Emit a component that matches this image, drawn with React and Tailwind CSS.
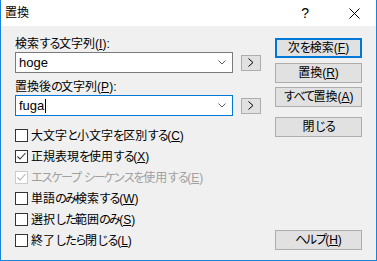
import React from 'react';

const font = { fontFamily: '"Liberation Sans", "Noto Sans CJK JP", sans-serif' };

// Meiryo UI 風に仮名だけ詰める
const Jp = ({ text }) =>
	Array.from(text).map((ch, i) =>
		/[\u3040-\u30ff]/.test(ch) ? (
			<span key={i} className="tracking-[-2px]">
				{ch}
			</span>
		) : (
			<span key={i}>{ch}</span>
		)
	);

const Key = ({ k }) => (
	<>
		(<span className="underline underline-offset-[1px]">{k}</span>)
	</>
);

const ComboBox = ({ value, focused, caret }) => (
	<div className="flex items-center">
		<div
			className={`w-[218px] h-[21px] bg-white flex items-center pl-[3px] pr-[5px] border ${
				focused ? 'border-[#0078d7]' : 'border-[#7a7a7a]'
			}`}
		>
			<span className="flex-1 flex items-center text-[13px] leading-none text-black">
				{value}
				{caret && <span className="inline-block w-px h-[14px] bg-black ml-px" />}
			</span>
			<svg width="8" height="5" viewBox="0 0 8 5" className="mr-[1px]">
				<polyline points="0.5,0.5 4,4 7.5,0.5" fill="none" stroke="#606060" strokeWidth="1" />
			</svg>
		</div>
		<div className="ml-[8px] w-[20px] h-[16px] bg-[#e1e1e1] border border-[#adadad] flex items-center justify-center">
			<svg width="6" height="9" viewBox="0 0 6 9">
				<polyline points="0.5,0.5 5,4.5 0.5,8.5" fill="none" stroke="#000" strokeWidth="1" />
			</svg>
		</div>
	</div>
);

const CheckRow = ({ checked, disabled, label, k }) => (
	<div className="h-[21px] flex items-center">
		<div
			className={`w-[13px] h-[13px] bg-white border flex items-center justify-center ${
				disabled ? 'border-[#cccccc]' : 'border-[#333333]'
			}`}
		>
			{checked && (
				<svg width="11" height="11" viewBox="0 0 11 11">
					<polyline
						points="1.5,5.5 4,8 9.5,2"
						fill="none"
						stroke={disabled ? '#b0b0b0' : '#333'}
						strokeWidth="1.1"
					/>
				</svg>
			)}
		</div>
		<span
			className={`ml-[3px] text-[12px] leading-none ${
				disabled ? 'text-[#a0a0a0]' : 'text-black'
			}`}
		>
			<Jp text={label} />
			<Key k={k} />
		</span>
	</div>
);

const Button = ({ children, primary, className = '' }) => (
	<div
		className={`w-[87px] h-[20px] bg-[#e1e1e1] flex items-center justify-center text-[12px] leading-none text-black ${
			primary ? 'border-2 border-[#0078d7]' : 'border border-[#adadad]'
		} ${className}`}
	>
		{children}
	</div>
);

export default function App() {
	return (
		<div
			className="w-[377px] h-[261px] flex flex-col border-l border-r border-b border-[#1883d7] bg-[#f0f0f0] overflow-hidden"
			style={font}
		>
			{/* title bar */}
			<div className="h-[26px] bg-white flex items-center pl-[4px]">
				<span className="text-[12px] leading-none text-black">置換</span>
				<span className="ml-auto text-[14px] leading-none text-black mr-[40px]">?</span>
				<svg width="11" height="11" viewBox="0 0 11 11" className="mr-[16px]">
					<path d="M0.5 0.5 L10.5 10.5 M10.5 0.5 L0.5 10.5" stroke="#000" strokeWidth="1" />
				</svg>
			</div>

			{/* body */}
			<div className="flex-1 flex">
				<div className="flex flex-col pl-[14px] pt-[10px]">
					<div className="h-[16px] flex items-center text-[12px] leading-none">
						<Jp text="検索する文字列" />
						<Key k="I" />:
					</div>
					<ComboBox value="hoge" />
					<div className="h-[16px] mt-[6px] flex items-center text-[12px] leading-none">
						<Jp text="置換後の文字列" />
						<Key k="P" />:
					</div>
					<ComboBox value="fuga" focused caret />

					<div className="mt-[9px] flex flex-col">
						<CheckRow label="大文字と小文字を区別する" k="C" />
						<CheckRow checked label="正規表現を使用する" k="X" />
						<CheckRow checked disabled label="エスケープ シーケンスを使用する" k="E" />
						<CheckRow label="単語のみ検索する" k="W" />
						<CheckRow label="選択した範囲のみ" k="S" />
						<CheckRow label="終了したら閉じる" k="L" />
					</div>
				</div>

				<div className="ml-auto mr-[14px] flex flex-col pt-[12px] pb-[10px]">
					<Button primary>
						<Jp text="次を検索" />
						<Key k="F" />
					</Button>
					<Button className="mt-[5px]">
						置換<Key k="R" />
					</Button>
					<Button className="mt-[4px]">
						<Jp text="すべて置換" />
						<Key k="A" />
					</Button>
					<Button className="mt-[10px]">
						<Jp text="閉じる" />
					</Button>
					<Button className="mt-auto">
						<Jp text="ヘルプ" />
						<Key k="H" />
					</Button>
				</div>
			</div>
		</div>
	);
}
